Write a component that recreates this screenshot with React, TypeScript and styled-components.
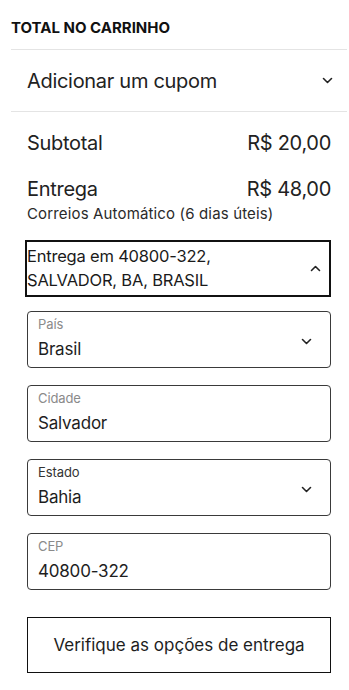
import React from 'react';
import styled, { createGlobalStyle } from 'styled-components';

const GlobalStyle = createGlobalStyle`
  body {
    margin: 0;
    background: #fff;
    font-family: Inter, "Noto Sans", "Liberation Sans", sans-serif;
    color: #1c1c1c;
  }
`;

const Panel = styled.div`
  width: 349px;
  padding: 0 2px 0 11px;
  box-sizing: border-box;
`;

const Title = styled.h2`
  margin: 0;
  padding: 18px 0 11px;
  font-size: 15px;
  line-height: 20px;
  font-weight: 700;
  letter-spacing: 0;
  color: #111;
  border-bottom: 1px solid #e4e4e4;
`;

const CouponRow = styled.div`
  display: flex;
  align-items: center;
  justify-content: space-between;
  height: 61px;
  padding: 0 14px 0 16px;
  border-bottom: 1px solid #e4e4e4;
  font-size: 20px;
  color: #222;
  letter-spacing: -0.3px;
`;

const Body = styled.div`
  padding: 17px 16px 20px;
`;

const TotalRow = styled.div<{ $gap?: number }>`
  display: flex;
  justify-content: space-between;
  font-size: 20px;
  line-height: 28px;
  color: #222;
  letter-spacing: -0.3px;
  margin-top: ${({ $gap }) => $gap ?? 0}px;
`;

const Note = styled.div`
  margin-top: 1px;
  font-size: 15px;
  line-height: 20px;
  color: #2a2a2a;
  letter-spacing: 0.15px;
`;

const AddressToggle = styled.div`
  margin-top: 16px;
  display: flex;
  align-items: center;
  justify-content: space-between;
  border: 2px solid #111;
  margin-left: -2px;
  padding: 2px 8px 3px 0;
  font-size: 16.5px;
  line-height: 24px;
  color: #1a1a1a;
  letter-spacing: -0.2px;
`;

const Field = styled.div`
  position: relative;
  margin-top: 14px;
  height: 57px;
  box-sizing: border-box;
  border: 1px solid #3a3a3a;
  border-radius: 4px;
  padding: 4px 10px 0;
  display: flex;
  flex-direction: column;

  & + & {
    margin-top: 17px;
  }
`;

const FieldLabel = styled.span<{ $dark?: boolean }>`
  font-size: 13px;
  line-height: 17px;
  color: ${({ $dark }) => ($dark ? '#333' : '#8a8a8a')};
  letter-spacing: -0.1px;
`;

const FieldValue = styled.span`
  margin-top: 4px;
  font-size: 17px;
  line-height: 24px;
  color: #1e1e1e;
  letter-spacing: -0.2px;
`;

const FieldChevron = styled.span`
  position: absolute;
  right: 18px;
  top: 26px;
  display: flex;
`;

const Button = styled.button`
  margin-top: 27px;
  width: 100%;
  height: 56px;
  background: #fff;
  border: 1px solid #111;
  font-family: inherit;
  font-size: 17px;
  color: #1e1e1e;
  letter-spacing: 0;
  cursor: pointer;
`;

const Chevron = ({ up }: { up?: boolean }) => (
  <svg width="11" height="7" viewBox="0 0 11 7" fill="none">
    <path
      d={up ? 'M1.5 5.5 L5.5 1.5 L9.5 5.5' : 'M1.5 1.5 L5.5 5.5 L9.5 1.5'}
      stroke="#222"
      strokeWidth="1.6"
      strokeLinecap="round"
      strokeLinejoin="round"
    />
  </svg>
);

const fields = [
  { label: 'País', value: 'Brasil', select: true },
  { label: 'Cidade', value: 'Salvador', select: false },
  { label: 'Estado', value: 'Bahia', select: true, dark: true },
  { label: 'CEP', value: '40800-322', select: false },
];

export default function App() {
  return (
    <>
      <GlobalStyle />
      <Panel>
        <Title>TOTAL NO CARRINHO</Title>
        <CouponRow>
          <span>Adicionar um cupom</span>
          <Chevron />
        </CouponRow>
        <Body>
          <TotalRow>
            <span>Subtotal</span>
            <span>R$ 20,00</span>
          </TotalRow>
          <TotalRow $gap={18}>
            <span>Entrega</span>
            <span>R$ 48,00</span>
          </TotalRow>
          <Note>Correios Automático (6 dias úteis)</Note>
          <AddressToggle>
            <span>
              Entrega em 40800-322,
              <br />
              SALVADOR, BA, BRASIL
            </span>
            <Chevron up />
          </AddressToggle>
          {fields.map((f) => (
            <Field key={f.label}>
              <FieldLabel $dark={f.dark}>{f.label}</FieldLabel>
              <FieldValue>{f.value}</FieldValue>
              {f.select && (
                <FieldChevron>
                  <Chevron />
                </FieldChevron>
              )}
            </Field>
          ))}
          <Button>Verifique as opções de entrega</Button>
        </Body>
      </Panel>
    </>
  );
}
